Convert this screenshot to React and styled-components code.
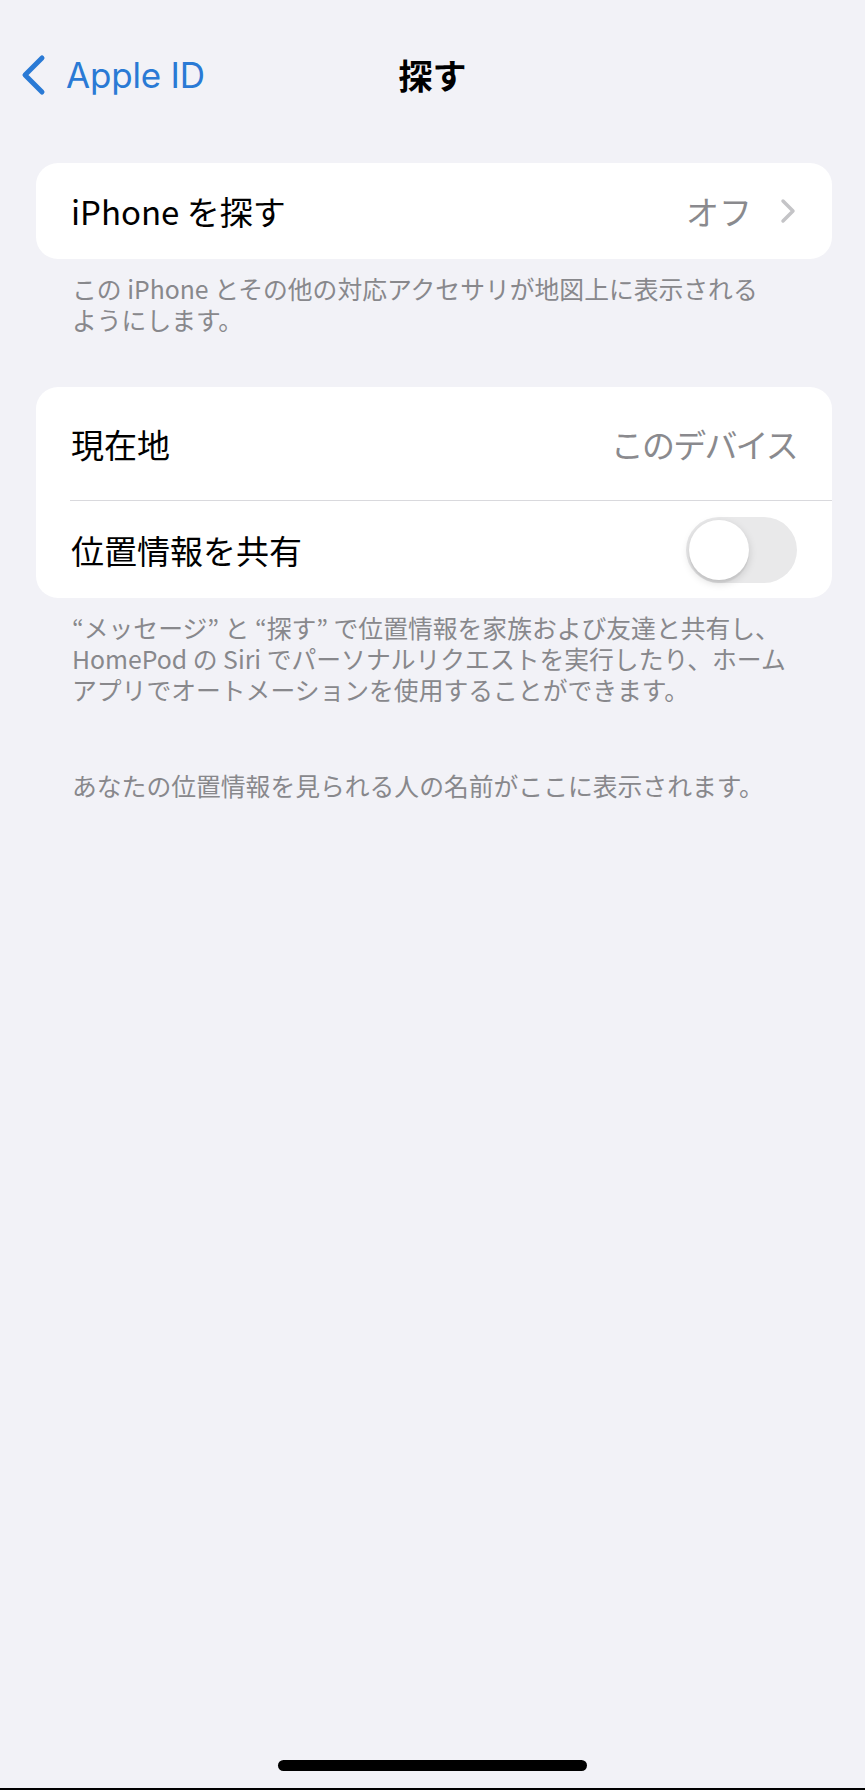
import React from "react";
import styled, { createGlobalStyle } from "styled-components";

const GlobalStyle = createGlobalStyle`
  html, body {
    margin: 0;
    padding: 0;
    background: #f2f2f7;
  }
  body {
    font-family: "Noto Sans CJK JP", "Noto Sans", sans-serif;
    -webkit-font-smoothing: antialiased;
  }
`;

const Page = styled.div`
  display: flex;
  flex-direction: column;
  width: 865px;
  height: 1790px;
  box-sizing: border-box;
  background: #f2f2f7;
  border-bottom: 2px solid #000;
`;

const NavBar = styled.div`
  display: grid;
  grid-template-columns: 1fr auto 1fr;
  align-items: center;
  height: 40px;
  margin-top: 50px;
  padding: 0 20px;
`;

const BackButton = styled.div`
  display: flex;
  align-items: center;
  gap: 20px;
  color: #2a7ad5;
  font-family: Inter, "Noto Sans", sans-serif;
  font-size: 35px;
  letter-spacing: -0.2px;
`;

const Title = styled.div`
  font-size: 34px;
  font-weight: 700;
  color: #000;
`;

const Content = styled.div`
  display: flex;
  flex-direction: column;
  padding: 0 33px 0 36px;
`;

const Card = styled.div`
  background: #fff;
  border-radius: 22px;
  overflow: hidden;
  margin-top: ${(p) => p.$top}px;
`;

const Row = styled.div`
  display: flex;
  align-items: center;
  justify-content: space-between;
  height: ${(p) => p.$height}px;
  padding: 0 35px;
  box-sizing: border-box;
`;

const Label = styled.span`
  font-size: 33px;
  line-height: 40px;
  color: #000;
`;

const Value = styled.span`
  display: flex;
  align-items: center;
  gap: 28px;
  font-size: 33px;
  line-height: 40px;
  color: #8a8a8e;
  letter-spacing: ${(p) => p.$tight || 0}px;
`;

const Separator = styled.div`
  height: 1px;
  margin-left: 34px;
  background: #d9d9dd;
`;

const Footer = styled.div`
  padding: 0 36px;
  margin-top: ${(p) => p.$top}px;
  font-size: 24.8px;
  line-height: 31px;
  color: #88888c;
`;

const Toggle = styled.div`
  width: 111px;
  height: 66px;
  border-radius: 33px;
  background: #e9e9ea;
  padding: 3px;
  box-sizing: border-box;
  display: flex;
  align-items: center;
`;

const Knob = styled.div`
  width: 60px;
  height: 60px;
  border-radius: 50%;
  background: #fff;
  box-shadow: 0 3px 8px rgba(0, 0, 0, 0.15), 0 3px 1px rgba(0, 0, 0, 0.06);
`;

const HomeIndicator = styled.div`
  width: 309px;
  height: 11px;
  border-radius: 6px;
  background: #000;
  margin: auto auto 17px;
`;

const BackChevron = () => (
  <svg width="26" height="42" viewBox="0 0 26 42" fill="none">
    <path
      d="M22 4 L5 21 L22 38"
      stroke="#2a7ad5"
      strokeWidth="5"
      strokeLinecap="round"
      strokeLinejoin="round"
    />
  </svg>
);

const Chevron = () => (
  <svg width="17" height="26" viewBox="0 0 17 26" fill="none">
    <path
      d="M3 3 L13 13 L3 23"
      stroke="#c4c4c7"
      strokeWidth="3.5"
      strokeLinecap="round"
      strokeLinejoin="round"
    />
  </svg>
);

export default function App() {
  return (
    <>
      <GlobalStyle />
      <Page>
        <NavBar>
          <BackButton>
            <BackChevron />
            Apple ID
          </BackButton>
          <Title>探す</Title>
          <div />
        </NavBar>

        <Content>
          <Card $top={73}>
            <Row $height={96}>
              <Label>iPhone を探す</Label>
              <Value>
                オフ
                <Chevron />
              </Value>
            </Row>
          </Card>
          <Footer $top={14}>
            この iPhone とその他の対応アクセサリが地図上に表示される
            <br />
            ようにします。
          </Footer>

          <Card $top={52}>
            <Row $height={113}>
              <Label>現在地</Label>
              <Value $tight={-1.8}>このデバイス</Value>
            </Row>
            <Separator />
            <Row $height={97}>
              <Label>位置情報を共有</Label>
              <Toggle>
                <Knob />
              </Toggle>
            </Row>
          </Card>
          <Footer $top={14}>
            “メッセージ” と “探す” で位置情報を家族および友達と共有し、
            <br />
            HomePod の Siri でパーソナルリクエストを実行したり、ホーム
            <br />
            アプリでオートメーションを使用することができます。
          </Footer>
          <Footer $top={65}>
            あなたの位置情報を見られる人の名前がここに表示されます。
          </Footer>
        </Content>

        <HomeIndicator />
      </Page>
    </>
  );
}
